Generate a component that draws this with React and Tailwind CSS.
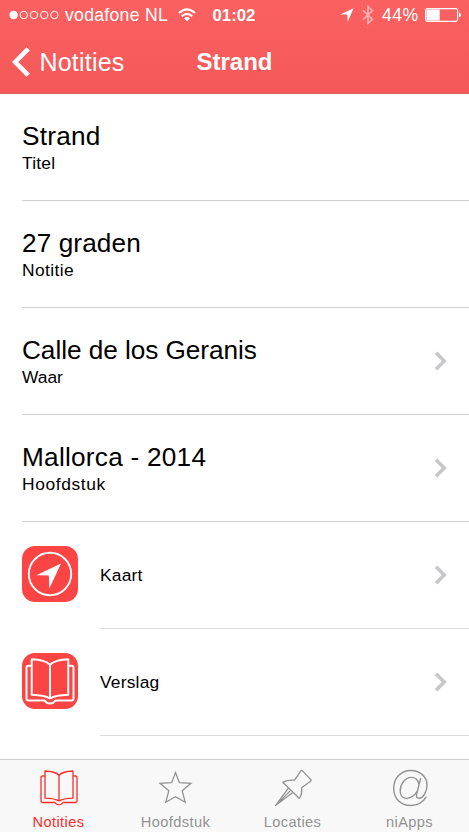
const notes = [
  { title: 'Strand', label: 'Titel', titleSpacing: 'tracking-[0.25px]', labelSpacing: 'tracking-[0.2px]' },
  { title: '27 graden', label: 'Notitie', titleSpacing: 'tracking-[0.1px]', labelSpacing: 'tracking-[0.4px]' },
  { title: 'Calle de los Geranis', label: 'Waar', link: true, titleSpacing: 'tracking-[-0.05px]', labelSpacing: 'tracking-[0px]' },
  { title: 'Mallorca - 2014', label: 'Hoofdstuk', link: true, titleSpacing: 'tracking-[0.25px]', labelSpacing: 'tracking-[0.6px]' },
];

function Chevron() {
  return (
    <svg className="shrink-0" width="13" height="20" viewBox="0 0 13 20" fill="none" stroke="#c7c7cc" strokeWidth="3.6">
      <path d="M2 1.8l8.2 8.2-8.2 8.2" />
    </svg>
  );
}

function Book({ width, height, strokeWidth }) {
  return (
    <svg width={width} height={height} viewBox="0 0 38 36" fill="none" stroke="currentColor" strokeWidth={strokeWidth} strokeLinejoin="round">
      <path d="M19 5.2C16 2.2 11 1.2 5 1V28.2C11 28.4 16 29.2 19 31C22 29.2 27 28.4 33 28.2V1C27 1.2 22 2.2 19 5.2Z" />
      <path d="M19 5.2V31" />
      <path d="M5 6H2.5Q1 6 1 7.5V31Q1 32.5 2.5 32.5H15Q16.3 34.8 19 34.8Q21.7 34.8 23 32.5H35.5Q37 32.5 37 31V7.5Q37 6 35.5 6H33" />
    </svg>
  );
}

function MapIcon() {
  return (
    <svg width="56" height="56" viewBox="0 0 56 56">
      <circle cx="28" cy="28" r="21.2" fill="none" stroke="#fff" strokeWidth="1.9" />
      <path d="M39 17.4L14.3 29.2L26.8 29.6L27.4 42.6Z" fill="#fff" />
    </svg>
  );
}

function ActionRow({ label, children }) {
  return (
    <div className="flex h-[107px] pl-[22px]">
      <div className="mt-[24.4px] mr-[22px] flex size-[56px] shrink-0 items-center justify-center rounded-[13px] bg-[#fb4444] text-white">
        {children}
      </div>
      <div className="flex flex-1 items-center justify-between border-b border-[#dcdcde] pr-[22px]">
        <span className="text-[17.4px] tracking-[0.2px]">{label}</span>
        <Chevron />
      </div>
    </div>
  );
}

function Tab({ label, active, children }) {
  return (
    <div className={`flex w-[117px] flex-col items-center ${active ? 'text-[#fb2b2b]' : 'text-[#929292]'}`}>
      <div className="mt-[8px] flex h-[40px] items-center justify-center">{children}</div>
      <span className="mt-[5px] text-[14.6px] leading-[18px] tracking-[0.4px]">{label}</span>
    </div>
  );
}

export default function App() {
  return (
    <div className="flex h-[832px] w-[469px] flex-col overflow-hidden bg-white font-['Liberation_Sans',Arial,sans-serif] text-black">
      <header className="h-[94px] shrink-0 border-b border-[#e0605f] bg-linear-to-b from-[#fc6161] to-[#f45858] text-white">
        <div className="flex h-[30px] items-center pl-[9px] text-[17.6px]">
          <svg width="51" height="10" viewBox="0 0 51 10" fill="none" stroke="#fff">
            <circle cx="4.6" cy="5" r="4.2" fill="#fff" stroke="none" />
            <circle cx="14.8" cy="5" r="3.7" />
            <circle cx="25" cy="5" r="3.7" />
            <circle cx="35.2" cy="5" r="3.7" />
            <circle cx="45.4" cy="5" r="3.7" />
          </svg>
          <span className="ml-[5px] w-[113px] whitespace-nowrap tracking-[0.3px]">vodafone NL</span>
          <svg width="18" height="14" viewBox="0 0 18 14" fill="none" stroke="#fff" strokeWidth="2.2">
            <path d="M1 5Q9-2.2 17 5M3.8 8.2Q9 3.5 14.2 8.2" />
            <path d="M6 10.3Q9 7.8 12 10.3L9 13.3Z" fill="#fff" stroke="none" />
          </svg>
          <span className="ml-[16.5px] w-[127.5px] pt-px text-[16.8px] font-bold">01:02</span>
          <svg width="14" height="14" viewBox="0 0 14 14" fill="#fff">
            <path d="M13.6.2L.3 6.5H7.3L7.7 13.7Z" />
          </svg>
          <svg className="ml-[8px]" width="12" height="20" viewBox="0 0 12 20" fill="none" stroke="#fff" strokeOpacity=".5" strokeWidth="1.6">
            <path d="M1 5.3L10.5 14.2L6 18.4V1.6L10.5 5.8L1 14.7" />
          </svg>
          <span className="ml-[8px] w-[43px] pt-px tracking-[0.5px]">44%</span>
          <svg width="37" height="14" viewBox="0 0 37 14">
            <rect x=".6" y=".6" width="32" height="12.8" rx="1.8" fill="none" stroke="#fff" strokeWidth="1.1" />
            <path d="M1.5 1.5H14.7V12.5H1.5Z" fill="#fff" />
            <path d="M34 4.6Q36 5 36 7T34 9.4Z" fill="#fff" />
          </svg>
        </div>
        <div className="flex h-[63px] items-center pl-[12px]">
          <svg width="19" height="30" viewBox="0 0 19 30" fill="none" stroke="#fff" strokeWidth="4.6">
            <path d="M16.2 1.8L3.2 15L16.2 28.2" />
          </svg>
          <span className="ml-[8.5px] w-[157px] pt-[2px] text-[25px] tracking-[0.2px]">Notities</span>
          <h1 className="pt-px text-[24px] font-bold">Strand</h1>
        </div>
      </header>
      <main className="h-[665px] shrink-0 overflow-hidden">
        {notes.map((n) => (
          <div key={n.label} className="flex h-[107px] pl-[22px]">
            <div className="flex flex-1 items-center justify-between border-b border-[#cfcfd1] pr-[22px]">
              <div>
                <div className={`text-[26.2px] leading-[30px] whitespace-nowrap ${n.titleSpacing}`}>{n.title}</div>
                <div className={`pt-[2px] text-[17.4px] leading-[20px] ${n.labelSpacing}`}>{n.label}</div>
              </div>
              {n.link && <Chevron />}
            </div>
          </div>
        ))}
        <ActionRow label="Kaart"><MapIcon /></ActionRow>
        <ActionRow label="Verslag"><Book width={50} height={47} strokeWidth={1.5} /></ActionRow>
      </main>
      <nav className="flex h-[73px] shrink-0 border-t border-[#cfcfcf] bg-[#f8f8f8]">
        <Tab label="Notities" active><Book width={38} height={36} strokeWidth={1.3} /></Tab>
        <Tab label="Hoofdstuk">
          <svg width="36" height="36" viewBox="0 0 36 36" fill="none" stroke="currentColor" strokeWidth="1.3">
            <path d="M17.5 2.5L21.4 12.7L33 13.3L24.2 20.8L27.2 32.2L17.5 26.8L7.8 32.2L10.8 20.8L2 13.3L13.6 12.7Z" />
          </svg>
        </Tab>
        <Tab label="Locaties">
          <svg width="38" height="38" viewBox="0 0 38 38" fill="none" stroke="currentColor" strokeWidth="1.3" strokeLinejoin="round">
            <path d="M26.8 1.9Q27.6 1 28.5 1.9L36.9 10.6Q37.6 11.5 36.6 12.2L27.6 18.8Q28.4 24.8 25.4 29.5L8.8 13.2Q14 10.6 20.6 11.2Z" />
            <path d="M14.4 19.2L1.5 36.6L18.8 23.6M1.5 36.6L16.6 21.4" />
          </svg>
        </Tab>
        <Tab label="niApps">
          <svg width="36" height="38" viewBox="0 0 36 38" fill="none" stroke="currentColor" strokeWidth="1.4" strokeLinecap="round">
            <path d="M34 28.2C30.5 34 25.5 36.5 18.9 36.5C8.5 36.5 1.7 29.5 1.7 19.3C1.7 9 9 1.5 18.8 1.5C28 1.5 35 7.7 35 16C35 23.5 31 29.3 27 29.3C24.5 29.3 24 27.3 24.8 24.5L28.6 9.6" />
            <path d="M26.8 14.8C26 11 23.4 8.4 19.4 8.4C13 8.4 8.2 15.2 8.2 22C8.2 26.4 10.6 29.4 14.3 29.4C18.6 29.4 22.8 26.3 24.6 23" />
          </svg>
        </Tab>
      </nav>
    </div>
  );
}
